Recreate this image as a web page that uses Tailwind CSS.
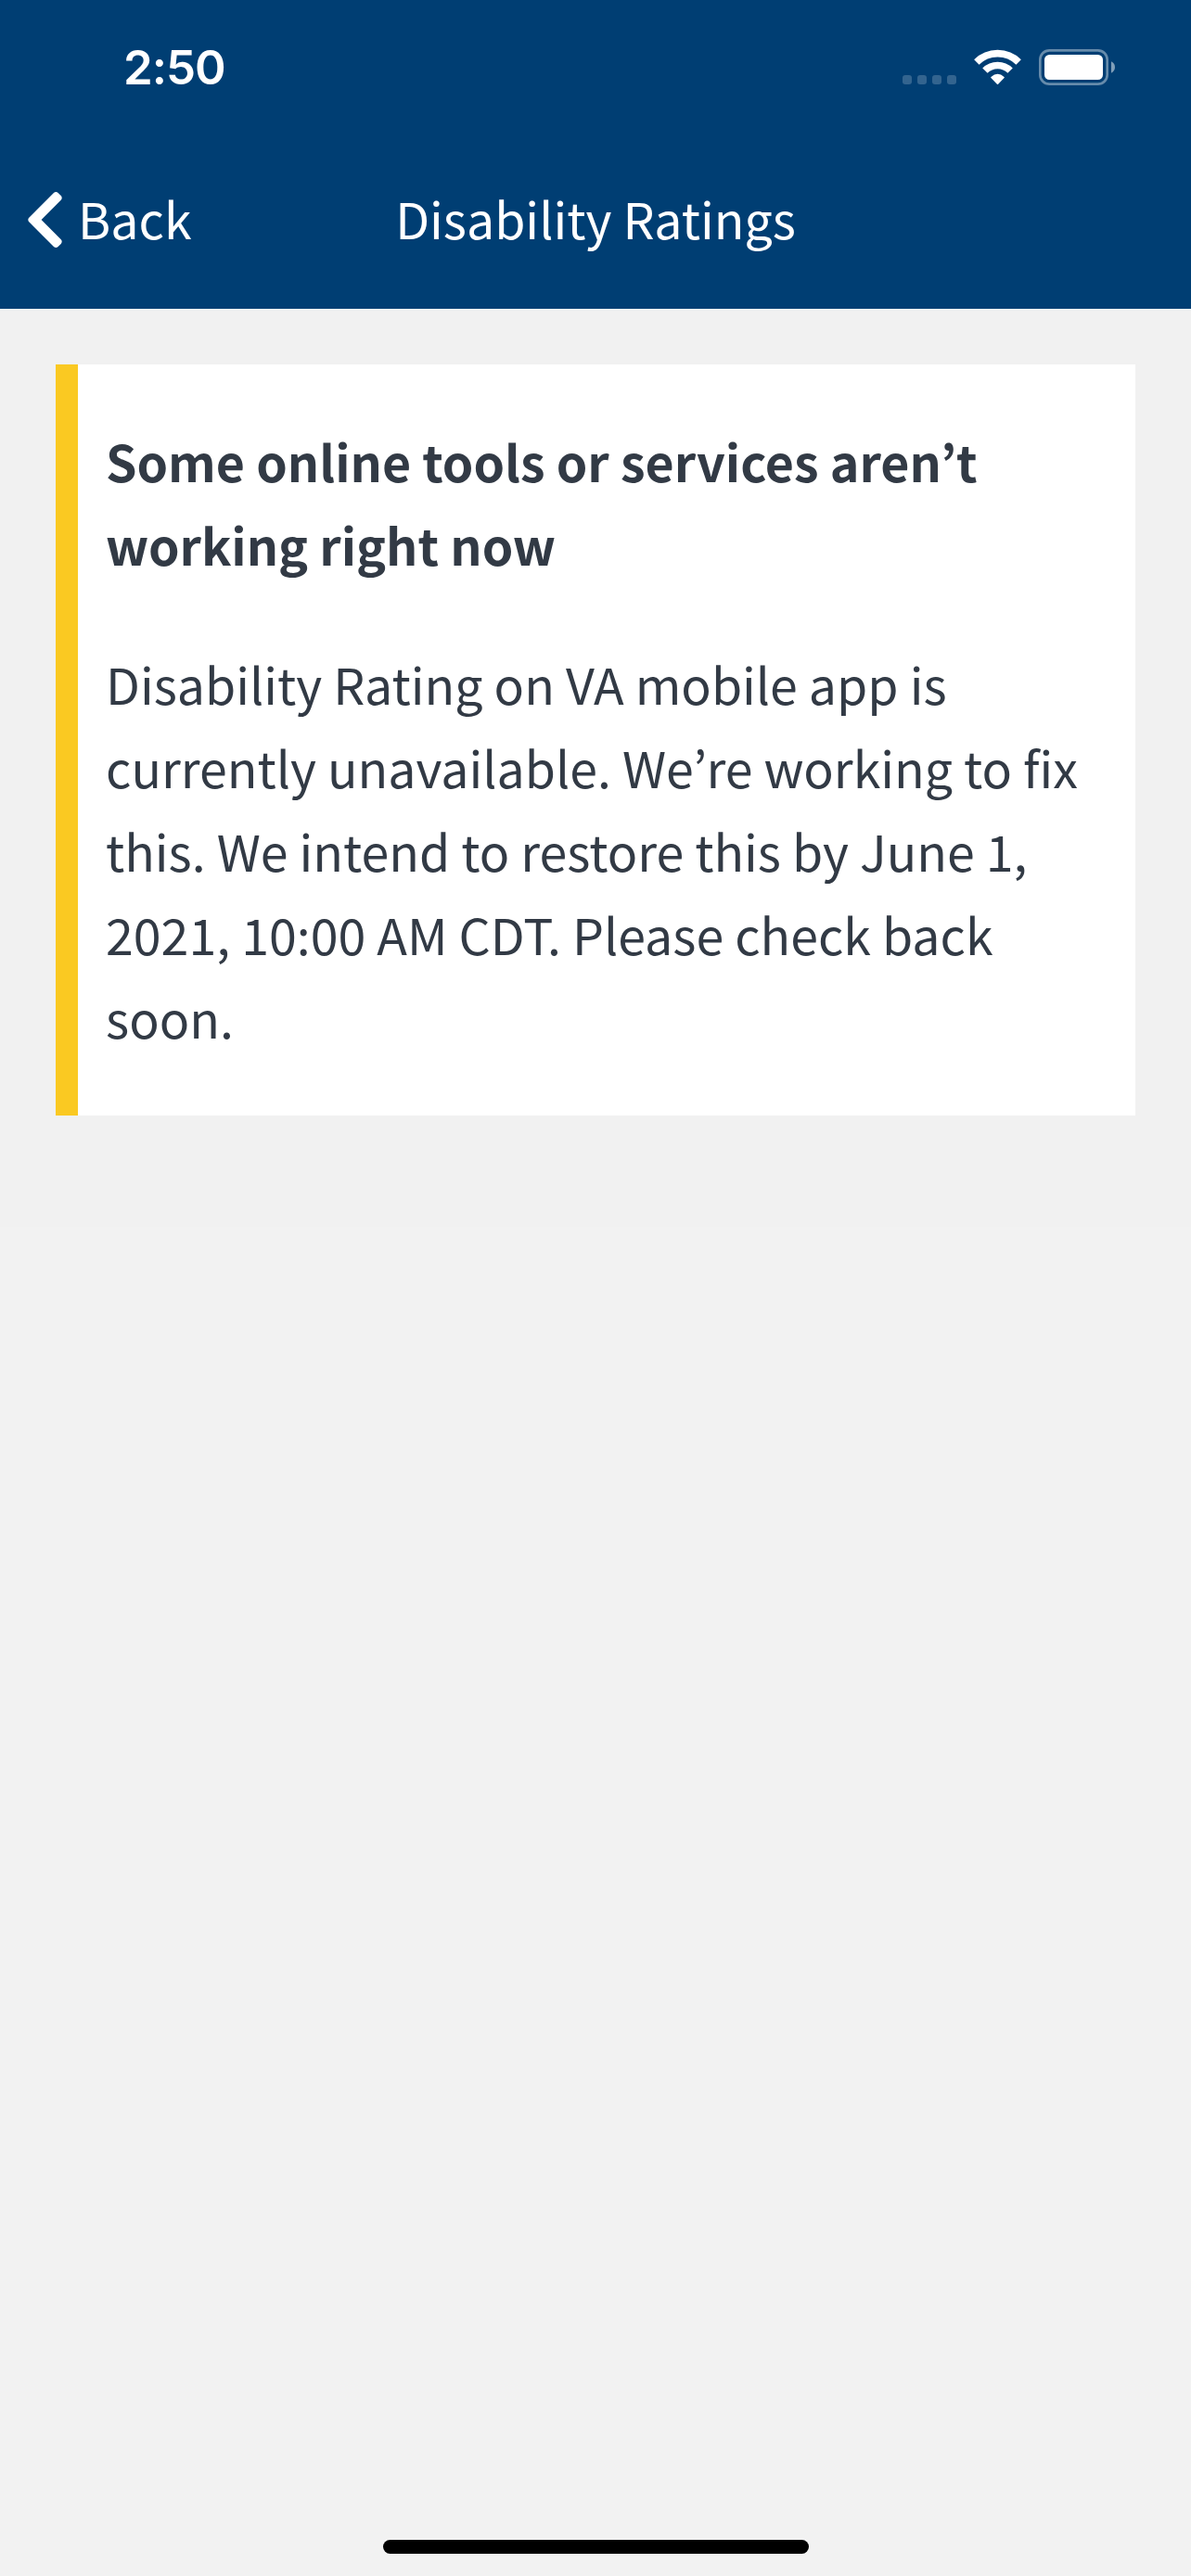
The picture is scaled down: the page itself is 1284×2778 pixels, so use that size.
<!DOCTYPE html>
<html lang="en">
<head>
<meta charset="utf-8">
<title>Disability Ratings</title>
<script src="https://cdn.jsdelivr.net/npm/@tailwindcss/browser@4"></script>
</head>
<body class="w-[1284px] h-[2778px] bg-[#f2f2f2] overflow-hidden flex flex-col font-['Noto_Sans_CJK_JP',sans-serif]">
<header class="h-[333px] shrink-0 bg-[#003e73] text-white">
  <!-- status bar -->
  <div class="h-[141px] flex items-center justify-between pl-[133px] pr-[82px] pt-1">
    <div class="font-['Inter',sans-serif] font-semibold text-[51px] leading-none tracking-[-1px]">2:50</div>
    <svg class="w-[229px] h-[39px]" viewBox="99 69 687 117" fill="#fff">
      <g fill-opacity=".2"><rect x="99" y="153" width="30" height="30" rx="9"/><rect x="147" y="153" width="30" height="30" rx="9"/><rect x="195" y="153" width="30" height="30" rx="9"/><rect x="243" y="153" width="30" height="30" rx="9"/></g>
      <g fill="none" stroke="#fff" stroke-width="23"><path d="M338.6 111.1A96 96 0 0 1 474.4 111.1"/><path d="M365.8 138.3A57.5 57.5 0 0 1 447.2 138.3"/></g>
      <path d="M406.5 180.5L387 160.5Q406.5 142.5 426 160.5Z" stroke="#fff" stroke-width="5" stroke-linejoin="round"/>
      <rect x="544" y="73" width="217" height="109" rx="30" fill="none" stroke="#fff" stroke-opacity=".4" stroke-width="8"/>
      <rect x="558" y="87" width="189" height="81" rx="16"/>
      <path d="M774 109Q786 115 786 127.5T774 146Z" fill-opacity=".5"/>
    </svg>
  </div>
  <!-- navigation bar -->
  <nav class="h-[192px] pb-[5px] grid grid-cols-[1fr_auto_1fr] items-center text-[53.7px] leading-[90px]">
    <div class="flex items-center pl-[30px] gap-[17px]">
      <svg class="w-[37px] h-[60px] mt-[5px]" viewBox="27.5 37.5 265 437" fill="#fff"><path d="M34.52 239.03L228.87 44.69c9.37-9.37 24.57-9.37 33.94 0l22.67 22.67c9.36 9.36 9.37 24.52.04 33.9L131.49 256l154.02 154.75c9.34 9.38 9.32 24.54-.04 33.9l-22.67 22.67c-9.37 9.37-24.57 9.37-33.94 0L34.52 272.97c-9.37-9.37-9.37-24.57 0-33.94z"/></svg>
      <span>Back</span>
    </div>
    <h1 class="whitespace-nowrap">Disability Ratings</h1>
  </nav>
</header>
<main class="h-[990px] shrink-0 p-[60px] bg-[#f1f1f1]">
  <section class="bg-white border-l-[24px] border-[#fac922] pl-[30px] pt-[59px] h-[810px] text-[#323a45] text-[53.7px] leading-[90px] whitespace-nowrap">
    <h2 class="font-bold mb-[60px]">Some online tools or services aren’t<br>working right now</h2>
    <p>Disability Rating on VA mobile app is<br>currently unavailable. We’re working to fix<br>this. We intend to restore this by June 1,<br>2021, 10:00 AM CDT. Please check back<br>soon.</p>
  </section>
</main>
<!-- home indicator -->
<div class="w-[459px] h-[15px] ml-[413px] mt-auto mb-6 shrink-0 rounded-full bg-black"></div>
</body>
</html>
